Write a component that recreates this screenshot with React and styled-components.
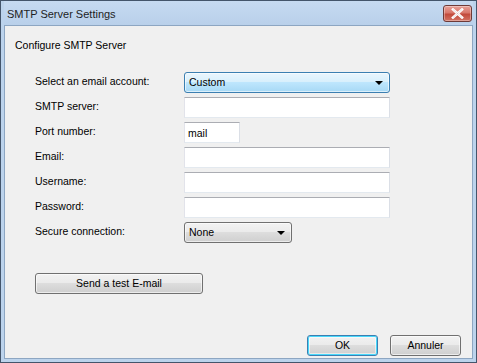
import React from 'react';
import styled, { createGlobalStyle } from 'styled-components';

const GlobalStyle = createGlobalStyle`
	html, body {
		margin: 0;
		padding: 0;
		background: #ffffff;
	}
	* {
		box-sizing: border-box;
	}
`;

const fields = [
	{ label: 'SMTP server:', width: 206, value: '' },
	{ label: 'Port number:', width: 56, value: 'mail' },
	{ label: 'Email:', width: 206, value: '' },
	{ label: 'Username:', width: 206, value: '' },
	{ label: 'Password:', width: 206, value: '' }
];

const App = () => {
	return (
		<>
			<GlobalStyle />
			<Window>
				<TitleBar>
					<Title>SMTP Server Settings</Title>
					<CloseButton>
						<svg width='13' height='11' viewBox='0 0 13 11'>
							<path
								d='M2 1.5 L11 9.5 M11 1.5 L2 9.5'
								stroke='#ffffff'
								strokeWidth='2.6'
								strokeLinecap='square'
							/>
							<path
								d='M2 1.5 L11 9.5 M11 1.5 L2 9.5'
								stroke='#6b2a24'
								strokeOpacity='0.25'
								strokeWidth='0.6'
							/>
						</svg>
					</CloseButton>
				</TitleBar>
				<Body>
					<Heading>Configure SMTP Server</Heading>
					<Form>
						<Label>Select an email account:</Label>
						<Combo width={206} focused>
							<span>Custom</span>
							<Arrow />
						</Combo>
						{fields.map(field => (
							<Row key={field.label}>
								<Label>{field.label}</Label>
								<TextBox width={field.width}>{field.value}</TextBox>
							</Row>
						))}
						<Label>Secure connection:</Label>
						<Combo width={108}>
							<span>None</span>
							<Arrow />
						</Combo>
					</Form>
					<TestButton>Send a test E-mail</TestButton>
					<Footer>
						<PushButton isDefault>OK</PushButton>
						<PushButton>Annuler</PushButton>
					</Footer>
				</Body>
			</Window>
		</>
	);
};

const uiFont = `'Liberation Sans', Arial, sans-serif`;

const Window = styled.div`
	width: 477px;
	height: 363px;
	display: flex;
	flex-direction: column;
	background: #bcd3ec;
	border: 1px solid #44556b;
	padding: 0 3px 3px 3px;
	font-family: ${uiFont};
	font-size: 10.5px;
	color: #000;
`;

const TitleBar = styled.div`
	height: 24px;
	display: flex;
	align-items: flex-start;
	justify-content: space-between;
	padding: 0 1px 0 3px;
	background: linear-gradient(#c6daf1, #b9d0ea);
`;

const Title = styled.div`
	font-size: 11px;
	line-height: 14px;
	padding-top: 6px;
	color: #1e1e1e;
`;

const CloseButton = styled.div`
	width: 29px;
	height: 17px;
	margin-top: 4px;
	border: 1px solid #6e3a37;
	border-radius: 3px;
	display: flex;
	align-items: center;
	justify-content: center;
	background: linear-gradient(#e8a198 0%, #d8776b 45%, #c24a3b 55%, #d27263 100%);
	box-shadow: inset 0 0 0 1px rgba(255, 255, 255, 0.35);
`;

const Body = styled.div`
	flex: 1;
	display: flex;
	flex-direction: column;
	background: #f0f0f0;
	border: 1px solid #8da6c2;
	padding: 13px 11px 2px 10px;
`;

const Heading = styled.div`
	line-height: 13px;
`;

const Form = styled.div`
	display: grid;
	grid-template-columns: 149px 1fr;
	grid-auto-rows: 21px;
	row-gap: 4px;
	margin: 20px 0 0 20px;

	& > *:nth-child(2) {
		margin-bottom: 4px;
	}
`;

const Row = styled.div`
	display: contents;
`;

const Label = styled.div`
	line-height: 13px;
	padding-top: 3px;
	color: #000;
`;

const TextBox = styled.div`
	width: ${props => props.width}px;
	height: 21px;
	background: #fff;
	border: 1px solid;
	border-color: #abadb3 #dbdfe6 #e3e9ef #e2e3ea;
	padding: 4px 3px 3px;
	line-height: 13px;
`;

const Combo = styled.div`
	width: ${props => props.width}px;
	height: 21px;
	display: flex;
	align-items: center;
	justify-content: space-between;
	padding: 0 6px 0 4px;
	border-radius: 3px;
	border: 1px solid ${props => (props.focused ? '#3c7fb1' : '#707070')};
	background: ${props =>
		props.focused
			? 'linear-gradient(#eaf6fd 0%, #d9f0fc 45%, #bee6fd 50%, #a7d9f5 100%)'
			: 'linear-gradient(#f2f2f2 0%, #ebebeb 45%, #dddddd 50%, #cfcfcf 100%)'};
	box-shadow: inset 0 0 0 1px rgba(255, 255, 255, 0.6);
	line-height: 13px;
`;

const Arrow = styled.span`
	width: 0;
	height: 0;
	border-left: 4px solid transparent;
	border-right: 4px solid transparent;
	border-top: 4px solid #000;
`;

const buttonBase = `
	height: 21px;
	display: flex;
	align-items: center;
	justify-content: center;
	border-radius: 3px;
	font-family: ${uiFont};
	font-size: 10.5px;
	color: #000;
	line-height: 13px;
`;

const TestButton = styled.div`
	${buttonBase};
	width: 168px;
	margin: 30px 0 0 20px;
	border: 1px solid #707070;
	background: linear-gradient(#f2f2f2 0%, #ebebeb 45%, #dddddd 50%, #cfcfcf 100%);
	box-shadow: inset 0 0 0 1px rgba(255, 255, 255, 0.6);
`;

const Footer = styled.div`
	margin-top: auto;
	display: flex;
	justify-content: flex-end;
	gap: 12px;
`;

const PushButton = styled.div`
	${buttonBase};
	width: 71px;
	border: 1px solid ${props => (props.isDefault ? '#3c7fb1' : '#707070')};
	background: linear-gradient(#f2f2f2 0%, #ebebeb 45%, #dddddd 50%, #cfcfcf 100%);
	box-shadow: ${props =>
		props.isDefault ? 'inset 0 0 0 1px #48d8fb, inset 0 0 0 2px rgba(255,255,255,0.5)' : 'inset 0 0 0 1px rgba(255, 255, 255, 0.6)'};
`;

export default App;
